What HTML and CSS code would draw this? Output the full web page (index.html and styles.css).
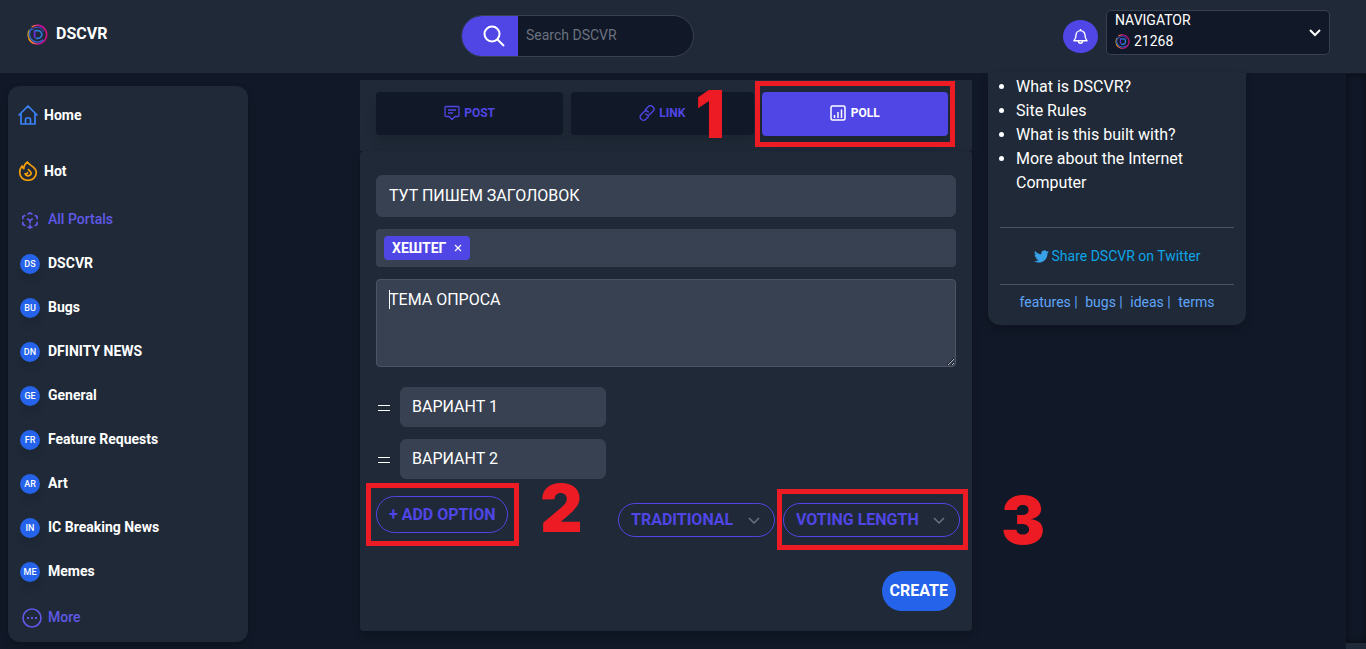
FILE: index.html
```
<!DOCTYPE html>
<html lang="en">

<head>
    <meta charset="UTF-8" />
    <meta name="viewport" content="width=device-width, initial-scale=1.0" />
    <title>DSCVR</title>
    <link rel="stylesheet" href="styles.css">
</head>

<body>

    <!-- shared symbols -->
    <svg class="symbols" aria-hidden="true">
        <defs>
            <linearGradient id="ring" x1="0" y1="0.5" x2="1" y2="0.5">
                <stop offset="0" stop-color="#f59e0b" />
                <stop offset="0.3" stop-color="#e8505b" />
                <stop offset="0.6" stop-color="#b5109c" />
                <stop offset="1" stop-color="#d0147c" />
            </linearGradient>
            <symbol id="logo" viewBox="0 0 22 22">
                <path d="M5 3.200A9.800 9.800 0 1 1 2 15.500" fill="none" stroke="url(#ring)" stroke-width="1.700" />
                <path d="M2.500 16A9.800 9.800 0 0 1 2.500 6" fill="none" stroke="#d99a1c" stroke-width="1.300" />
                <path d="M5 4.500A8 8 0 1 0 17 16.500" fill="none" stroke="#3468cf" stroke-width="1.500" />
                <path d="M5 6.500A7 7 0 0 1 17.500 8" fill="none" stroke="#4a4fd0" stroke-width="1" />
                <path d="M8 14.500v-8" fill="none" stroke="#6a2bd0" stroke-width="2" />
                <path d="M8 7h3.500a4 4 0 0 1 0 8H9" fill="none" stroke="#2f79d8" stroke-width="1.900" />
            </symbol>
        </defs>
    </svg>

    <header class="topbar">
        <a class="brand" href="#">
            <svg class="brand-logo"><use href="#logo" /></svg>
            DSCVR
        </a>
        <form class="search" role="search">
            <button class="search-button" type="button" aria-label="Search">
                <svg viewBox="0 0 22 22" fill="none" stroke="currentColor" stroke-width="2">
                    <circle cx="9" cy="9" r="7.500" />
                    <path d="M14.500 14.500l6.500 6.500" />
                </svg>
            </button>
            <input class="search-input" type="text" placeholder="Search DSCVR" aria-label="Search DSCVR">
        </form>
        <div class="account">
            <button class="bell" type="button" aria-label="Notifications">
                <svg viewBox="0 0 16 18" fill="none" stroke="currentColor" stroke-width="1.500" stroke-linejoin="round">
                    <path d="M8 1v1.500M1 13.500h14c-1.500-1.500-2.200-2.500-2.200-6a4.800 4.800 0 0 0-9.600 0c0 3.500-.7 4.500-2.200 6zM5.800 14a2.200 2.200 0 0 0 4.400 0" />
                </svg>
            </button>
            <button class="user" type="button">
                <span class="user-info">
                    <span>NAVIGATOR</span>
                    <span class="balance"><svg class="coin"><use href="#logo" /></svg>21268</span>
                </span>
                <svg class="user-arrow" viewBox="0 0 12 8" fill="none" stroke="currentColor" stroke-width="2">
                    <path d="M1 1l5 5 5-5" />
                </svg>
            </button>
        </div>
    </header>

    <div class="page">
        <nav class="sidebar">
            <a class="nav-main" href="#">
                <svg viewBox="0 0 20 20" fill="none" stroke="#3b82f6" stroke-width="1.700" stroke-linejoin="round" stroke-linecap="round">
                    <path d="M1 10L10 1l9 9M3 8.500V19h14V8.500M7.500 19v-4.500q0-1.500 1.500-1.500h2q1.500 0 1.500 1.500V19" />
                </svg>
                Home
            </a>
            <a class="nav-main" href="#">
                <svg viewBox="0 0 20 20" fill="none" stroke="#f59e0b" stroke-width="1.700" stroke-linejoin="round" stroke-linecap="round">
                    <path d="M9.500 1c.5 2.800 8.800 4.500 8.800 10.500a8.300 7.800 0 0 1-16.600 0c0-3 1-5 2.300-6.500.3 1.500.8 2.200 1.800 2.700C5.800 4.500 7.500 2.500 9.500 1z" />
                    <path d="M10.500 8.500c.3 1.300 2.700 1.700 2.700 3.700a3.200 3 0 0 1-6.200.6c1.300.4 2.500 0 2.500-1.200" />
                </svg>
                Hot
            </a>
            <ul class="portals">
                <li><a class="accent" href="#">
                    <svg class="portal-icon" viewBox="0 0 18 18" fill="none" stroke="currentColor" stroke-width="1.800" stroke-linecap="round">
                        <path d="M7 2l2-1 2 1M1.500 7V4.800l2-1M16.500 7V4.800l-2-1M1.500 11v2.200l2 1M16.500 11v2.200l-2 1M7 16l2 1 2-1M9 16v-2M6.500 7.500L9 9l2.500-1.500M9 9v2.500" />
                    </svg>
                    All Portals</a></li>
                <li><a href="#"><span class="badge">DS</span>DSCVR</a></li>
                <li><a href="#"><span class="badge">BU</span>Bugs</a></li>
                <li><a href="#"><span class="badge">DN</span>DFINITY NEWS</a></li>
                <li><a href="#"><span class="badge">GE</span>General</a></li>
                <li><a href="#"><span class="badge">FR</span>Feature Requests</a></li>
                <li><a href="#"><span class="badge">AR</span>Art</a></li>
                <li><a href="#"><span class="badge">IN</span>IC Breaking News</a></li>
                <li><a href="#"><span class="badge">ME</span>Memes</a></li>
                <li><a class="accent more" href="#">
                    <svg class="more-icon" viewBox="0 0 20 20" fill="none" stroke="currentColor" stroke-width="1.600">
                        <circle cx="10" cy="10" r="9" />
                        <path d="M5 10h2M9 10h2M13 10h2" stroke-width="2" />
                    </svg>
                    More</a></li>
            </ul>
        </nav>

        <div class="content">
            <main class="composer">
                <div class="tabs">
                    <button class="tab" type="button">
                        <svg viewBox="0 0 16 16" fill="none" stroke="currentColor" stroke-width="1.300" stroke-linejoin="round">
                            <path d="M2 1.500h12q1 0 1 1v8q0 1-1 1h-3L8 14.500l-3-3H2q-1 0-1-1v-8q0-1 1-1zM4 5h8M4 8h5" />
                        </svg>
                        POST
                    </button>
                    <button class="tab" type="button">
                        <svg viewBox="0 0 16 16" fill="none" stroke="currentColor" stroke-width="1.400" stroke-linecap="round">
                            <path d="M6.500 4.500l2.700-2.700a3.100 3.100 0 0 1 4.800 4.500l-2.800 2.800a3.200 3.200 0 0 1-4.500 0" />
                            <path d="M9.500 11.500l-2.700 2.700A3.100 3.100 0 0 1 2 9.700l2.800-2.800a3.200 3.200 0 0 1 4.500 0" />
                        </svg>
                        LINK
                    </button>
                    <button class="tab active" type="button">
                        <svg viewBox="0 0 16 16" fill="none" stroke="currentColor" stroke-width="1.500">
                            <rect x="1" y="1" width="14" height="14" rx="1.500" />
                            <path d="M4.500 13v-3M8 13V7M11.500 13V4.500" />
                        </svg>
                        POLL
                        <span class="mark mark-poll"></span>
                        <span class="step step-1">1</span>
                    </button>
                </div>

                <form class="panel">
                    <input class="field" type="text" value="ТУТ ПИШЕМ ЗАГОЛОВОК" aria-label="Title">
                    <div class="tags">
                        <span class="tag">ХЕШТЕГ
                            <button type="button" aria-label="Remove tag">
                                <svg viewBox="0 0 8 8" stroke="currentColor" stroke-width="1.200"><path d="M1 1l6 6M7 1L1 7" /></svg>
                            </button>
                        </span>
                    </div>
                    <div class="topic">
                        <textarea class="field" aria-label="Poll topic">ТЕМА ОПРОСА</textarea>
                        <span class="caret"></span>
                    </div>

                    <div class="option">
                        <svg viewBox="0 0 16 16" stroke="currentColor" stroke-width="1.200"><path d="M2 6.500h12M2 11.500h12" /></svg>
                        <input class="field" type="text" value="ВАРИАНТ 1" aria-label="Option 1">
                    </div>
                    <div class="option">
                        <svg viewBox="0 0 16 16" stroke="currentColor" stroke-width="1.200"><path d="M2 6.500h12M2 11.500h12" /></svg>
                        <input class="field" type="text" value="ВАРИАНТ 2" aria-label="Option 2">
                    </div>

                    <div class="settings">
                        <div class="marked">
                            <button class="pill" type="button">+ ADD OPTION</button>
                            <span class="mark mark-add"></span>
                            <span class="step step-2">2</span>
                        </div>
                        <div class="selects">
                            <div class="marked">
                                <select class="pill" aria-label="Poll type">
                                    <option>TRADITIONAL</option>
                                </select>
                                <svg class="chevron" viewBox="0 0 12 8" fill="none" stroke="currentColor" stroke-width="1.500"><path d="M1 1l5 5 5-5" /></svg>
                            </div>
                            <div class="marked">
                                <select class="pill" aria-label="Voting length">
                                    <option>VOTING LENGTH</option>
                                </select>
                                <svg class="chevron" viewBox="0 0 12 8" fill="none" stroke="currentColor" stroke-width="1.500"><path d="M1 1l5 5 5-5" /></svg>
                                <span class="mark mark-length"></span>
                                <span class="step step-3">3</span>
                            </div>
                        </div>
                    </div>

                    <button class="create" type="button">CREATE</button>
                </form>
            </main>

            <aside class="about">
                <ul>
                    <li><a href="#">What is DSCVR?</a></li>
                    <li><a href="#">Site Rules</a></li>
                    <li><a href="#">What is this built with?</a></li>
                    <li><a href="#">More about the Internet Computer</a></li>
                </ul>
                <a class="share" href="#">
                    <svg viewBox="0 0 24 24" fill="#38a1e8">
                        <path d="M23.950 4.570a10 10 0 0 1-2.820.770 4.960 4.960 0 0 0 2.160-2.720c-.950.550-2 .950-3.130 1.180a4.920 4.920 0 0 0-8.380 4.480C7.690 8.090 4.070 6.130 1.640 3.160a4.820 4.820 0 0 0-.670 2.480c0 1.710.870 3.210 2.190 4.100a4.900 4.900 0 0 1-2.230-.620v.060a4.920 4.920 0 0 0 3.950 4.830 5 5 0 0 1-2.210.080 4.940 4.940 0 0 0 4.600 3.420A9.870 9.870 0 0 1 0 19.540a14 14 0 0 0 7.550 2.210c9.050 0 14-7.500 14-13.980 0-.210 0-.420-.020-.630a9.940 9.940 0 0 0 2.420-2.570z" />
                    </svg>
                    Share DSCVR on Twitter
                </a>
                <div class="footer-links">
                    <a href="#">features</a> |
                    <a href="#">bugs</a> |
                    <a href="#">ideas</a> |
                    <a href="#">terms</a>
                </div>
            </aside>
        </div>

        <div class="rail"></div>
    </div>

</body>

</html>
```
FILE: styles.css
```
* {
    box-sizing: border-box;
}

body {
    margin: 0;
    height: 100vh;
    overflow: hidden;
    display: flex;
    flex-direction: column;
    background: #111827;
    color: #fff;
    font-family: Roboto, sans-serif;
    font-size: 16px;
    line-height: 24px;
}

a {
    color: inherit;
    text-decoration: none;
}

button,
input,
select,
textarea {
    font: inherit;
    color: inherit;
    margin: 0;
}

button,
select {
    cursor: pointer;
}

ul {
    list-style: none;
    margin: 0;
    padding: 0;
}

svg {
    flex-shrink: 0;
}

.symbols {
    position: absolute;
    width: 0;
    height: 0;
}

/* top bar */
.topbar {
    flex-shrink: 0;
    height: 73px;
    display: flex;
    align-items: flex-start;
    padding: 10px 36px 0 27px;
    background: #1f2937;
}

.brand {
    width: 434px;
    height: 48px;
    display: flex;
    align-items: center;
    gap: 8px;
    font-weight: 700;
}

.brand-logo {
    width: 21px;
    height: 21px;
}

.search {
    display: flex;
    width: 233px;
    height: 42px;
    margin-top: 5px;
    border: 1px solid #374151;
    border-radius: 21px;
    background: #111827;
    overflow: hidden;
}

.search-button {
    width: 56px;
    padding: 0 0 0 8px;
    border: 0;
    background: #4f46e5;
    display: flex;
    align-items: center;
    justify-content: center;
}

.search-button svg {
    width: 22px;
    height: 22px;
}

.search-input {
    flex: 1;
    min-width: 0;
    padding: 0 8px 2px;
    border: 0;
    background: none;
    font-size: 14px;
}

.search-input::placeholder {
    color: #6b7280;
    opacity: 1;
}

.account {
    margin-left: auto;
    display: flex;
    gap: 8px;
}

.bell {
    width: 35px;
    height: 33px;
    margin-top: 10px;
    padding: 0;
    border: 0;
    border-radius: 50%;
    background: #4f46e5;
    display: flex;
    align-items: center;
    justify-content: center;
}

.bell svg {
    width: 15px;
    height: 17px;
}

.user {
    width: 224px;
    height: 45px;
    display: flex;
    align-items: center;
    justify-content: space-between;
    padding: 0 8px;
    border: 1px solid #374151;
    border-radius: 5px;
    background: #111827;
    font-size: 14px;
    line-height: 21px;
    text-align: left;
}

.user-info {
    display: flex;
    flex-direction: column;
    padding-bottom: 3px;
}

.balance {
    display: flex;
    align-items: center;
    gap: 4px;
}

.coin {
    width: 15px;
    height: 15px;
}

.user-arrow {
    width: 12px;
    height: 8px;
}

/* page */
.page {
    flex: 1;
    min-height: 0;
    display: flex;
    align-items: flex-start;
}

.sidebar {
    width: 240px;
    flex-shrink: 0;
    margin: 13px 0 0 8px;
    padding: 5px 0 1px 10px;
    border-radius: 12px;
    background: #1f2937;
    box-shadow: 0 4px 8px rgba(0, 0, 0, 0.2);
    font-size: 14px;
    font-weight: 700;
}

.nav-main {
    display: flex;
    align-items: center;
    gap: 6px;
    height: 48px;
    margin-bottom: 8px;
}

.nav-main svg {
    width: 20px;
    height: 20px;
}

.nav-main + .portals {
    margin-top: -6px;
}

.portals a {
    display: flex;
    align-items: center;
    gap: 8px;
    height: 44px;
    padding-left: 2px;
}

.portals .accent {
    color: #6059e8;
    font-weight: 500;
}

.portals .more {
    height: 48px;
    padding-left: 4px;
    gap: 6px;
}

.badge {
    width: 20px;
    height: 20px;
    margin-top: 2px;
    border-radius: 50%;
    background: #2563eb;
    box-shadow: 0 8px 8px rgba(0, 0, 0, 0.06);
    font-size: 9px;
    font-weight: 500;
    line-height: 20px;
    text-align: center;
}

.portal-icon {
    width: 20px;
    height: 17px;
    margin-top: 2px;
}

.more-icon {
    width: 20px;
    height: 20px;
    margin-top: 2px;
}

.content {
    flex: 1;
    display: flex;
    align-items: flex-start;
    justify-content: center;
    gap: 16px;
    padding-left: 12px;
}

.composer {
    flex: 0 1 612px;
    margin-top: 7px;
}

.tabs {
    display: flex;
    align-items: flex-start;
    gap: 8px;
    padding: 12px 24px 15px 16px;
    background: #1f2937;
}

.tab {
    flex: 1 1 auto;
    position: relative;
    display: flex;
    align-items: center;
    justify-content: center;
    gap: 4px;
    height: 43px;
    padding: 0 0 2px;
    border: 0;
    border-radius: 4px;
    background: #111827;
    box-shadow: 0 8px 12px rgba(0, 0, 0, 0.1);
    color: #4f46e5;
    font-size: 12px;
    font-weight: 700;
}

.tab svg {
    width: 16px;
    height: 16px;
}

.tab.active {
    gap: 5px;
    height: 44px;
    background: #4f46e5;
    color: #fff;
}

.panel {
    display: flex;
    flex-direction: column;
    gap: 12px;
    padding: 24px 16px 20px;
    border-radius: 4px;
    background: #1f2937;
    box-shadow: 0 4px 8px rgba(0, 0, 0, 0.2);
}

.field {
    width: 100%;
    height: 42px;
    padding: 0 12px 2px;
    border: 1px solid #374151;
    border-radius: 6px;
    background: #374151;
}

.tags {
    height: 38px;
    padding: 7px 8px;
    border-radius: 4px;
    background: #374151;
}

.tag {
    display: inline-flex;
    align-items: center;
    gap: 8px;
    height: 24px;
    padding: 0 8px;
    border-radius: 4px;
    background: #4f46e5;
    font-size: 14px;
    font-weight: 700;
}

.tag button {
    display: flex;
    padding: 0;
    border: 0;
    background: none;
}

.tag svg {
    width: 8px;
    height: 8px;
}

.topic {
    position: relative;
    display: flex;
    margin-bottom: 8px;
}

.topic .field {
    height: 88px;
    padding: 8px 12px;
    border-color: #4b5563;
    border-radius: 4px;
}

.caret {
    position: absolute;
    left: 13px;
    top: 11px;
    width: 1px;
    height: 19px;
    background: #fff;
}

.option {
    display: flex;
    align-items: center;
    gap: 8px;
}

.option svg {
    width: 16px;
    height: 16px;
}

.option .field {
    width: 206px;
    height: 40px;
    padding: 0 11px 2px;
}

.settings {
    display: flex;
    align-items: flex-start;
    justify-content: space-between;
    margin: 5px -4px 0 0;
}

.selects {
    display: flex;
    gap: 8px;
    margin-top: 7px;
}

.marked {
    position: relative;
}

.pill {
    display: block;
    height: 37px;
    padding: 0 12px;
    border: 1px solid #4f46e5;
    border-radius: 19px;
    background: none;
    color: #4f46e5;
    font-weight: 700;
}

select.pill {
    appearance: none;
    height: 34px;
    padding-right: 40px;
}

.chevron {
    position: absolute;
    right: 15px;
    top: 14px;
    width: 12px;
    height: 8px;
    color: #6b7280;
    pointer-events: none;
}

.create {
    align-self: flex-end;
    height: 40px;
    margin-top: 22px;
    padding: 0 8px;
    border: 0;
    border-radius: 20px;
    background: #2563eb;
    font-weight: 700;
}

/* tutorial marks */
.mark {
    position: absolute;
    border: 5px solid #ed1c24;
    pointer-events: none;
}

.mark-poll {
    inset: -11px -7px;
}

.mark-add {
    inset: -13px -11px -13px -10px;
}

.mark-length {
    inset: -14px -8px -13px -6px;
}

.step {
    position: absolute;
    color: #ed1c24;
    font-family: Inter, sans-serif;
    font-size: 66px;
    font-weight: 900;
    line-height: 66px;
    pointer-events: none;
}

.step-1 {
    right: 223px;
    top: -11px;
}

.step-2 {
    left: 164px;
    top: -21px;
}

.step-3 {
    left: 218px;
    top: -16px;
}

/* right column */
.about {
    width: 258px;
    padding: 2px 12px 11px;
    border-radius: 0 0 12px 12px;
    background: #1f2937;
    box-shadow: 0 4px 8px rgba(0, 0, 0, 0.2);
}

.about ul {
    list-style: disc;
    padding: 0 16px 32px;
}

.share {
    display: flex;
    align-items: center;
    justify-content: center;
    gap: 3px;
    height: 58px;
    border: solid #4b5563;
    border-width: 1px 0;
    color: #0ea5e9;
    font-size: 14px;
}

.share svg {
    width: 15px;
    height: 15px;
}

.footer-links {
    padding-top: 5px;
    color: #60a5fa;
    font-size: 14px;
    text-align: center;
}

.footer-links a + a {
    margin-left: 4px;
}

.rail {
    align-self: stretch;
    width: 20px;
    margin-top: 1px;
    border-bottom: 6px solid #1f2937;
    box-shadow: inset 0 0 8px rgba(0, 0, 0, 0.5);
}
```
